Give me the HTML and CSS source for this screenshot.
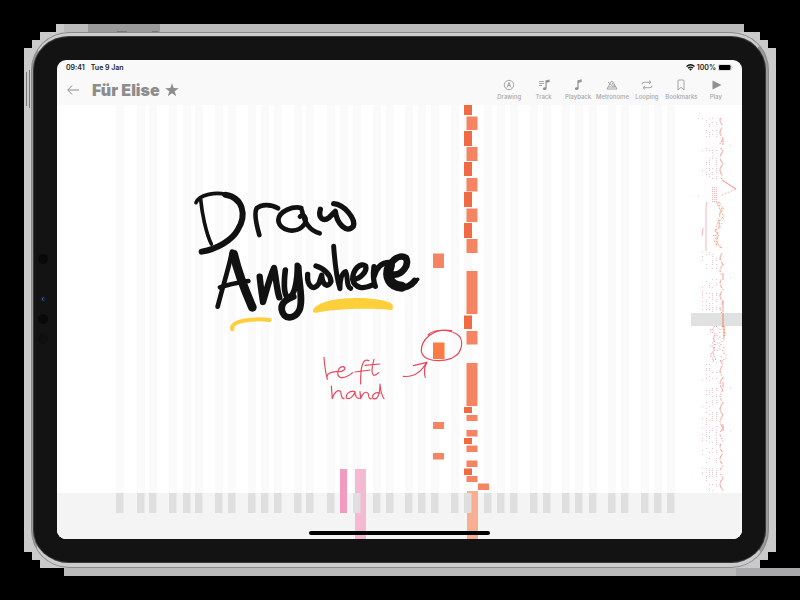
FILE: index.html
```html
<!DOCTYPE html>
<html lang="en">
<head>
<meta charset="utf-8">
<title>Für Elise</title>
<link rel="stylesheet" href="styles.css">
</head>
<body>
<svg class="backdrop" viewBox="0 0 800 600" preserveAspectRatio="none" aria-hidden="true">
  <path fill="#cacaca" d="M24 48h8v-8h8v-8h16v-8H744v8h16v8h8v8h8V552h-8v8h-8v8h40v8H64v-8H40v-8h-8v-8h-8z"/>
  <path fill="#bbb" d="M64 24H744v8H64zM64 568H744v8H64z"/>
  <path fill="#a9a9ac" d="M736 568h64v8h-64z"/>
  <path fill="#999" d="M88 24h72v8H88z"/>
  <path fill="#000" d="M760 560h40v8h-40z"/>
  <path fill="none" stroke="#777" d="M26.500 72v34M29.500 70v38"/>
  <path stroke="#777" d="M117 31.500h10M152 31.500h6"/>
</svg>
<main class="device">
  <svg class="sensors" viewBox="0 0 16 100" aria-hidden="true">
    <circle cx="8" cy="9" r="5" fill="#090909"/><circle cx="8" cy="49" r="2.500" fill="#10243c"/><path d="M8.500 47.500L7 49l1.500 1.500" fill="none" stroke="#2d6296"/><circle cx="8" cy="69" r="5" fill="#090909"/><circle cx="8" cy="89" r="5" fill="#0f0f0f"/>
  </svg>
  <div class="screen">
    <div class="status">
      <span>09:41</span><span>Tue 9 Jan</span>
      <span class="power">
        <svg width="9" height="7" viewBox="0 0 18 14" fill="none" stroke="#111" stroke-width="2.600" aria-hidden="true"><path d="M1 5Q9-2 17 5M4 8.500Q9 4 14 8.500"/><path fill="#111" stroke="none" d="M6 10Q9 8 12 10L9 13.500z"/></svg>
        <span>100%</span>
        <svg width="15" height="7" viewBox="0 0 30 14" aria-hidden="true"><rect x=".5" y=".5" width="26" height="13" rx="4" fill="#fff" stroke="#aaa"/><rect x="2" y="2" width="23" height="10" rx="2.500"/><path d="M28 5q2 2 0 4z" fill="#999"/></svg>
      </span>
    </div>
    <header class="bar">
      <button class="back" aria-label="Back"><svg width="12" height="10" viewBox="0 0 12 10" fill="none" stroke="#8c8c8c"><path d="M12 5H1M5 .5L.8 5 5 9.500"/></svg></button>
      <h1>Für Elise</h1>
      <svg class="star" width="14" height="14" viewBox="0 0 14 14" fill="#8d8d8d" aria-hidden="true"><path d="M7 .3l1.700 4.800 5.100.1-4.100 3.100 1.500 5L7 10.300l-4.200 3 1.500-5L.2 5.200l5.100-.1z"/></svg>
      <nav class="tools">
        <button><svg viewBox="0 0 12 12"><circle cx="6" cy="6" r="4.700"/><path d="M4 8.500L6 3.300l2 5.200M5 6.800q1-1 2 0"/></svg>Drawing</button>
        <button><svg viewBox="0 0 12 12"><path d="M1 2.500h5M1 4.500h5M1 6.500h3"/><path class="stem" d="M8 9.500V2l3-.7v1.200L8 3.200"/><ellipse class="solid" cx="6.700" cy="9.700" rx="1.800" ry="1.400"/></svg>Track</button>
        <button><svg viewBox="0 0 12 12"><path class="stem" d="M6 9.500V2l3-.9v1.400L6 3.400"/><ellipse class="solid" cx="4.700" cy="9.700" rx="1.800" ry="1.400"/></svg>Playback</button>
        <button><svg viewBox="0 0 12 12"><path d="M1 10L5.200 2.500h1.600L11 10zM2.500 8h7M2 3l5.500 5M6 4l3 4"/></svg>Metronome</button>
        <button><svg viewBox="0 0 12 12"><path d="M1 5.500Q1 3.300 3 3.300h6.500M8 1.500l2 1.800L8 5M11 6.500q0 2.200-2 2.200H2.500M4 7L2 8.700l2 1.800"/></svg>Looping</button>
        <button><svg viewBox="0 0 12 12"><path d="M3 11V2q0-1 1-1h4q1 0 1 1v9L6 8.300z"/></svg>Bookmarks</button>
        <button><svg viewBox="0 0 12 12"><path class="solid" d="M2.500 1.500l9 4.500-9 4.500z"/></svg>Play</button>
      </nav>
    </header>
    <svg class="roll" viewBox="57 105 685 434" preserveAspectRatio="none" role="img" aria-label="Piano roll">
      <rect x="57" y="105" width="685" height="434" fill="#fff"/>
      <g id="lanes" fill="#fafafa"></g>
      <rect x="57" y="493" width="685" height="46" fill="#f4f4f4"/>
      <path fill="#f4bad2" d="M355 469h11v70h-11z"/>
      <path fill="#f8ae90" d="M467 491h11v48h-11z"/>
      <g id="keys" fill="#dfdfdf"></g>
      <path fill="#f29bc0" d="M340 469h7v44h-7z"/>
      <g id="notes"></g>
      <rect x="691" y="313" width="51" height="13" fill="#e0e2e1"/>
      <g id="minimap"></g>
      <g fill="none" stroke-width=".8" opacity=".75">
        <path stroke="#ee8295" d="M707 202q-1 1-1 6v43M703 228l-1 8"/>
        <path stroke="#ef8a80" stroke-width="1.200" d="M722 180l14 9"/>
        <path stroke="#ef8a80" d="M736 189l-16 7" stroke-dasharray="2 1.500"/>
        <path stroke="#f0866a" stroke-width="1.400" d="M723 313v14"/>
      </g>
      <g transform="translate(180 180) scale(.3333)" fill="none" stroke="#111" stroke-linecap="round" stroke-linejoin="round">
        <g stroke-width="12">
          <path stroke-width="11" d="M62 58C66 100 78 160 94 192M48 68C58 42 110 36 136 43"/>
          <path stroke-width="14" d="M238 165C228 130 222 98 230 85 245 71 275 73 294 85"/>
          <path stroke-width="14" d="M364 84C340 78 297 92 295 120 297 152 350 166 374 132 382 116 372 98 360 110"/>
          <path stroke-width="14" d="M366 92C372 125 385 151 419 160"/>
          <path stroke-width="16" d="M421 88C414 115 430 126 447 113L466 94C470 130 500 163 520 139 528 116 492 73 461 71"/>
          <path stroke-width="14" d="M156 215C148 260 125 330 113 380M120 322C145 313 180 307 205 303"/>
          <path stroke-width="19" d="M239 290C242 320 246 345 249 366 258 336 270 290 282 264 288 290 290 330 298 352"/>
          <path stroke-width="17" d="M316 270C310 320 313 352 326 352 345 346 352 300 352 256"/>
          <path stroke-width="16" d="M383 283C380 318 401 336 417 310L425 286C428 320 446 323 453 304 452 284 430 264 408 258"/>
          <path stroke-width="15" d="M461 199C464 240 468 290 480 326 480 300 485 279 497 275 505 290 498 320 512 325"/>
          <path stroke-width="16" d="M518 299C542 298 562 273 557 258 543 246 518 267 518 298 523 326 553 328 578 315"/>
          <path stroke-width="16" d="M582 260C579 285 580 305 586 319M582 290C590 262 605 246 630 247"/>
        </g>
        <path stroke-width="18" d="M136 44C188 52 202 105 173 150 155 182 110 207 65 215"/>
        <path stroke-width="26" d="M161 222C170 262 198 338 217 382"/>
        <path stroke-width="20" d="M355 262C355 300 371 360 358 391 343 420 310 420 305 388 303 368 323 356 340 350"/>
        <path stroke-width="20" d="M641 284C665 286 689 256 678 234 657 219 624 246 622 282 630 331 680 333 704 303"/>
        <path stroke-width="30" d="M630 256C616 292 630 317 665 320"/>
        <path stroke-width="11" d="M690 312L713 298"/>
        <path fill="#fdd03b" stroke="none" d="M399 390C425 343 610 348 637 373 642 391 636 391 627 389 560 384 470 386 409 398 401 399 398 396 399 390z"/>
        <path stroke="#fdd03b" stroke-width="12" d="M157 448C150 420 225 415 269 420"/>
      </g>
      <g transform="translate(300 320) scale(.3333)" fill="none" stroke="#e8485c" stroke-width="3.500" stroke-linecap="round" stroke-linejoin="round">
        <path d="M72 112C74 140 77 160 82 178 76 160 95 155 110 155 130 157 142 145 130 140 113 140 108 165 120 172 134 175 150 165 158 158"/>
        <path d="M207 122C188 113 181 140 182 192M165 156L210 150M222 118C215 140 213 165 223 166 228 166 232 162 236 158M195 136L239 132"/>
        <path d="M94 198L97 236C102 215 115 208 122 215 125 225 122 235 132 236M165 215C150 208 135 225 140 235 150 240 163 225 165 215 165 228 170 236 178 235M180 215L182 236C186 220 200 210 205 222 206 232 208 238 214 236M240 220C225 212 212 230 220 236 232 240 240 225 240 192 242 215 246 228 252 236"/>
        <path d="M310 169C340 172 365 155 380 126M340 137L381 127C372 140 372 160 376 172M455 32C400 22 362 60 364 95 370 125 420 127 455 115 492 98 492 55 470 42 440 25 400 28 384 45"/>
      </g>
      <rect x="309" y="531" width="181" height="4" rx="2" fill="#000"/>
    </svg>
  </div>
</main>
<script src="roll.js"></script>
</body>
</html>
```
FILE: styles.css
```css
* { box-sizing: border-box; }
body {
  margin: 0;
  min-height: 100vh;
  display: flex;
  padding: 33px 32px;
  background: #000;
  font-family: Inter, "Liberation Sans", sans-serif;
}
.backdrop { position: absolute; inset: 0; width: 100%; height: 100%; }
.device {
  position: relative;
  flex: 1;
  display: flex;
  padding: 24px;
  background: #131313;
  border: solid #ccc;
  border-width: 3px 2px 4px 1px;
  border-color: #ccc #999 #ccc #999;
  border-radius: 37px;
  box-shadow: inset 0 0 0 1px #3a3a3a, 0 0 0 1px #8a8a8a;
}
.sensors { position: absolute; left: 2px; top: 214px; width: 16px; height: 100px; }
.screen {
  flex: 1;
  display: flex;
  flex-direction: column;
  min-width: 0;
  overflow: hidden;
  background: #f8f9f8;
  border-radius: 9px;
}
.status {
  display: flex;
  align-items: center;
  gap: 6px;
  height: 14px;
  padding: 0 9px;
  font-size: 7px;
  font-weight: 600;
  color: #222;
}
.power { display: flex; align-items: center; gap: 2px; margin-left: auto; }
.bar {
  display: flex;
  align-items: center;
  height: 31px;
  padding: 0 9px 0 10px;
}
button { padding: 0; border: 0; background: none; font: inherit; }
.back { display: flex; margin-right: 13px; }
h1 { margin: 0; font-size: 16px; line-height: 20px; font-weight: 900; color: #8d8d8d; }
.star { margin-left: 5px; }
.tools {
  display: grid;
  grid-template-columns: repeat(7, 1fr);
  width: 241px;
  margin-left: auto;
}
.tools button {
  display: flex;
  flex-direction: column;
  align-items: center;
  gap: 2px;
  min-width: 0;
  font-size: 6px;
  line-height: 8px;
  font-weight: 500;
  color: #a8a8a8;
}
.tools svg { width: 12px; height: 12px; fill: none; stroke: #8f8f8f; stroke-width: 0.8; }
.tools .stem { stroke-width: 1.2; }
.tools .solid { fill: #8f8f8f; stroke: none; }
.roll { flex: 1; min-height: 0; width: 100%; display: block; }
```
FILE: roll.js
```js
const NS = "http://www.w3.org/2000/svg";
const rect = (parent, x, y, width, height, fill) => {
  const el = document.createElementNS(NS, "rect");
  Object.entries({ x, y, width, height }).forEach(([k, v]) => el.setAttribute(k, v));
  if (fill) el.setAttribute("fill", fill);
  document.getElementById(parent).append(el);
};

// Left edges of the black keys, A#0 to A#7
const blackKeys = [116, 137, 149, 169, 183, 195, 215, 228, 248, 261, 274, 294, 306, 327, 340, 353, 373, 386,
  405, 418, 431, 451, 464, 484, 497, 510, 530, 543, 562, 575, 589, 608, 621, 641, 654, 667];
blackKeys.forEach(x => {
  rect("lanes", x, 105, 8, 388);
  if (x !== 340) rect("keys", x, 493, 7.500, 20);
});

// Notes: x, width, colour, then [top, bottom] pairs
const notes = [
  [464, 8, "#ee6b43", [[105, 115], [131, 146], [162, 176], [192, 207], [223, 238], [315.5, 329], [407, 413], [438, 444], [468.5, 475]]],
  [466.5, 11, "#f58562", [[116.5, 130], [147, 161], [178, 191.5], [208.5, 222], [239, 253], [271, 314], [331, 344.5], [363, 406], [415, 421], [430, 436.5], [445.5, 452], [460.5, 467], [476, 482]]],
  [478, 11, "#f58562", [[483.5, 490]]],
  [433, 11, "#f58562", [[253.5, 268], [422, 429], [453, 459.5]]],
  [433, 11.500, "#fb7b44", [[342.5, 359]]]
];
notes.forEach(([x, w, c, spans]) => spans.forEach(([a, b]) => rect("notes", x, a, w, b - a, c)));

// Overview of the whole piece
let seed = 7;
const rnd = () => (seed = (seed * 16807) % 2147483647) / 2147483647;
const sections = [[118, 137], [148, 179], [252, 270], [279, 312], [362, 381], [388, 423], [424, 455], [458, 491]];
sections.forEach(([a, b]) => {
  for (let y = a; y < b; y += 2) {
    [702, 706, 709, 712, 716].forEach((x, i) => {
      if (rnd() < (i ? .5 : .25)) rect("minimap", x, y, 0.9, 0.9, "#efb9b9");
    });
  }
});
const melody = (a, b, fill) => {
  for (let y = a; y < b; y += 1.200) {
    const x = 722.5 - Math.abs(Math.sin(y / 4)) * 3;
    if (rnd() < .75) rect("minimap", x, y, 1.200, 1, fill);
  }
};
[[118, 144], [148, 180], [252, 312], [360, 492]].forEach(([a, b]) => melody(a, b, "#ee9d97"));
[[138, 145], [273, 280], [382, 387], [424, 431], [300, 312]].forEach(([a, b]) => rect("minimap", 722.5, a, 1, b - a, "#f0a29a"));
for (let y = 187; y < 202; y += 2) [712, 714, 716].forEach(x => rect("minimap", x, y, 0.9, 0.9, "#eda2a6"));
for (let y = 202; y < 248; y += 1.500) {
  const x = 718 + Math.sin((y - 202) / 7) * 3;
  for (let k = 0; k < 3; k++) rect("minimap", x + rnd() * 5 - 2, y, 1, 1, "#f1aa8e");
}
for (let y = 326; y < 361; y += 1.500) {
  rect("minimap", 710 + rnd() * 8, y, 1, 1, "#eea1aa");
  rect("minimap", 712 + rnd() * 2, y, 1, 1, "#eea1aa");
  rect("minimap", 719 + rnd() * 7, y, 1, 1, "#f2a08c");
  if (y < 337) rect("minimap", 723, y, 2, 1, "#f2a17f");
}
[[698, 118], [698, 196], [730, 145], [730, 277], [730, 388], [730, 430]].forEach(([x, y]) => rect("minimap", x, y, 1, 1, "#f0caca"));
```
